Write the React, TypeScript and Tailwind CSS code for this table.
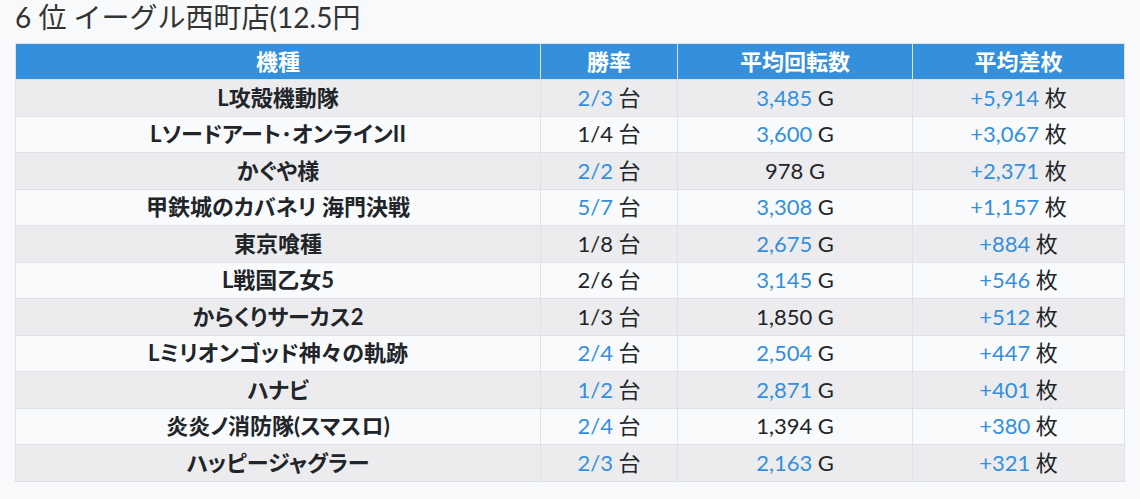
const ROWS: { name: string; win: string; winHi: boolean; spin: string; spinHi: boolean; diff: string }[] = [
  { name: "L攻殻機動隊", win: "2/3", winHi: true, spin: "3,485", spinHi: true, diff: "+5,914" },
  { name: "Lソードアート･オンラインII", win: "1/4", winHi: false, spin: "3,600", spinHi: true, diff: "+3,067" },
  { name: "かぐや様", win: "2/2", winHi: true, spin: "978", spinHi: false, diff: "+2,371" },
  { name: "甲鉄城のカバネリ 海門決戦", win: "5/7", winHi: true, spin: "3,308", spinHi: true, diff: "+1,157" },
  { name: "東京喰種", win: "1/8", winHi: false, spin: "2,675", spinHi: true, diff: "+884" },
  { name: "L戦国乙女5", win: "2/6", winHi: false, spin: "3,145", spinHi: true, diff: "+546" },
  { name: "からくりサーカス2", win: "1/3", winHi: false, spin: "1,850", spinHi: false, diff: "+512" },
  { name: "Lミリオンゴッド神々の軌跡", win: "2/4", winHi: true, spin: "2,504", spinHi: true, diff: "+447" },
  { name: "ハナビ", win: "1/2", winHi: true, spin: "2,871", spinHi: true, diff: "+401" },
  { name: "炎炎ノ消防隊(スマスロ)", win: "2/4", winHi: true, spin: "1,394", spinHi: false, diff: "+380" },
  { name: "ハッピージャグラー", win: "2/3", winHi: true, spin: "2,163", spinHi: true, diff: "+321" },
];

export default function App() {
  return (
    <div className="min-h-[499px] bg-[#f8f9fb] px-[15px] text-[#212529] [font-family:Lato,'Noto_Sans_CJK_JP',sans-serif]">
      <h1 className="text-[28px] leading-[34px] font-normal text-[#333]">6 位 イーグル西町店(12.5円</h1>
      <table className="mt-[9px] w-[1110px] border-collapse text-center text-[22px] leading-[30px]">
        <thead>
          <tr className="bg-[#3490dc] text-white">
            <th className="h-9 w-[525px] border border-[#dee2e6] font-bold">機種</th>
            <th className="h-9 w-[137px] border border-[#dee2e6] font-bold">勝率</th>
            <th className="h-9 w-[235px] border border-[#dee2e6] font-bold">平均回転数</th>
            <th className="h-9 border border-[#dee2e6] font-bold">平均差枚</th>
          </tr>
        </thead>
        <tbody>
          {ROWS.map((r, i) => (
            <tr key={r.name} className={i % 2 === 0 ? "bg-[#ececee]" : "bg-[#f9fafb]"}>
              <td className="h-[36.5px] border border-[#dee2e6] font-bold [font-feature-settings:'palt']">{r.name}</td>
              <td className="h-[36.5px] border border-[#dee2e6]">
                <span className={r.winHi ? "text-[#3490dc]" : ""}>{r.win}</span> 台
              </td>
              <td className="h-[36.5px] border border-[#dee2e6]">
                <span className={r.spinHi ? "text-[#3490dc]" : ""}>{r.spin}</span> G
              </td>
              <td className="h-[36.5px] border border-[#dee2e6]">
                <span className="text-[#3490dc]">{r.diff}</span> 枚
              </td>
            </tr>
          ))}
        </tbody>
      </table>
    </div>
  );
}
